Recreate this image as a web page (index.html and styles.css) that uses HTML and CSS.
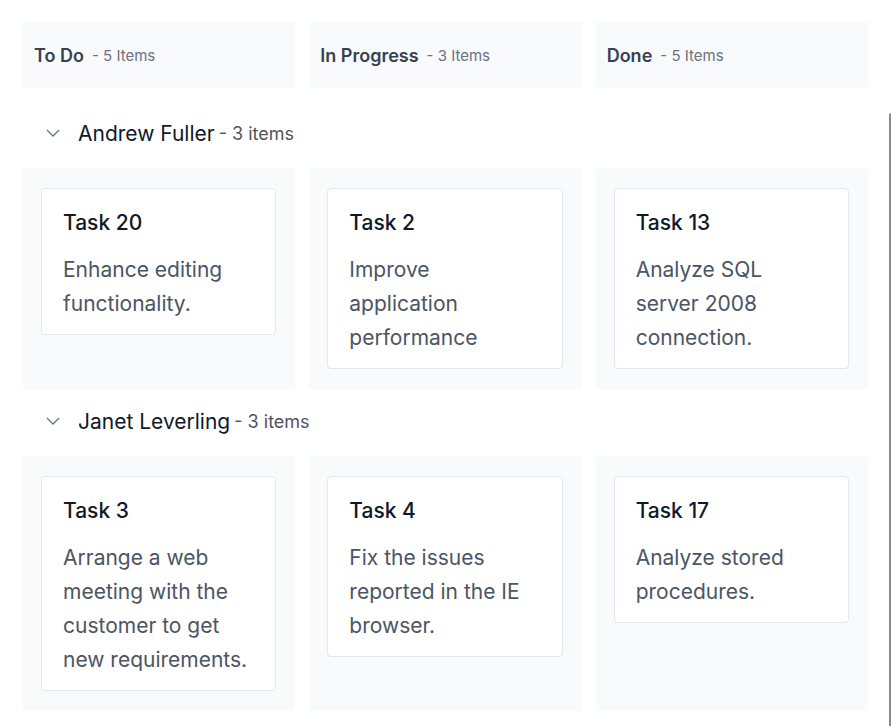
FILE: index.html
```html
<!DOCTYPE html>
<html lang="en">
<head>
    <meta charset="UTF-8">
    <title>Kanban Swimlane</title>
    <link rel="stylesheet" href="styles.css">
</head>
<body>
    <div class="kanban">
        <div class="header-row">
            <div class="col-header"><span class="col-title">To Do</span><span class="col-count">- 5 Items</span></div>
            <div class="col-header"><span class="col-title">In Progress</span><span class="col-count">- 3 Items</span></div>
            <div class="col-header"><span class="col-title">Done</span><span class="col-count">- 5 Items</span></div>
        </div>

        <div class="lane lane-first">
            <div class="lane-header">
                <svg class="chevron" width="16" height="10" viewBox="0 0 16 10"><path d="M2 2 L8 8 L14 2" fill="none" stroke="#6b7280" stroke-width="1.3"/></svg>
                <span class="lane-name">Andrew Fuller</span><span class="lane-count">- 3 items</span>
            </div>
            <div class="lane-row">
                <div class="cell">
                    <div class="card">
                        <div class="card-title">Task 20</div>
                        <div class="card-text">Enhance editing functionality.</div>
                    </div>
                </div>
                <div class="cell">
                    <div class="card">
                        <div class="card-title">Task 2</div>
                        <div class="card-text">Improve application performance</div>
                    </div>
                </div>
                <div class="cell">
                    <div class="card">
                        <div class="card-title">Task 13</div>
                        <div class="card-text">Analyze SQL server 2008 connection.</div>
                    </div>
                </div>
            </div>
        </div>

        <div class="lane">
            <div class="lane-header">
                <svg class="chevron" width="16" height="10" viewBox="0 0 16 10"><path d="M2 2 L8 8 L14 2" fill="none" stroke="#6b7280" stroke-width="1.3"/></svg>
                <span class="lane-name">Janet Leverling</span><span class="lane-count">- 3 items</span>
            </div>
            <div class="lane-row">
                <div class="cell">
                    <div class="card">
                        <div class="card-title">Task 3</div>
                        <div class="card-text">Arrange a web meeting with the customer to get new requirements.</div>
                    </div>
                </div>
                <div class="cell">
                    <div class="card">
                        <div class="card-title">Task 4</div>
                        <div class="card-text">Fix the issues reported in the IE browser.</div>
                    </div>
                </div>
                <div class="cell">
                    <div class="card">
                        <div class="card-title">Task 17</div>
                        <div class="card-text">Analyze stored procedures.</div>
                    </div>
                </div>
            </div>
        </div>
    </div>
    <div class="scroll-edge"></div>
</body>
</html>
```

FILE: styles.css
```css
body {
    margin: 0;
    padding: 22px 23px;
    font-family: Inter, "Noto Sans", sans-serif;
    background: #ffffff;
    color: #111827;
}
.kanban {
    width: 845px;
}
.header-row,
.lane-row {
    display: grid;
    grid-template-columns: repeat(3, 1fr);
    gap: 14px;
}
.col-header {
    background: #f8fafc;
    height: 66px;
    display: flex;
    align-items: center;
    padding: 0 11px;
    border-radius: 2px;
}
.col-title {
    font-size: 18px;
    font-weight: 600;
    color: #374151;
    margin-right: 8px;
}
.col-count {
    font-size: 15px;
    color: #6b7280;
}
.lane-header {
    display: flex;
    align-items: center;
    height: 30px;
    margin: 17px 0 20px;
    padding-left: 22px;
}
.lane-first .lane-header {
    margin-top: 30px;
}
.chevron {
    margin-right: 17px;
}
.lane-name {
    font-size: 21px;
    color: #111827;
    margin-right: 4px;
}
.lane-count {
    font-size: 18px;
    color: #52525b;
}
.cell {
    background: #f8fafc;
    padding: 20px 19px 20px 18px;
    border-radius: 2px;
}
.card {
    background: #ffffff;
    border: 1px solid #e2e8f0;
    border-radius: 4px;
    padding: 19px 21px 13px;
}
.card-title {
    font-size: 21px;
    font-weight: 500;
    line-height: 30px;
    color: #111827;
    margin-bottom: 15px;
}
.card-text {
    font-size: 21px;
    line-height: 34px;
    color: #4b5563;
}
.scroll-edge {
    position: fixed;
    right: 0;
    top: 113px;
    bottom: 0;
    width: 0;
    border-left: 2px solid #8a8a8a;
    border-top-left-radius: 2px;
}
```
